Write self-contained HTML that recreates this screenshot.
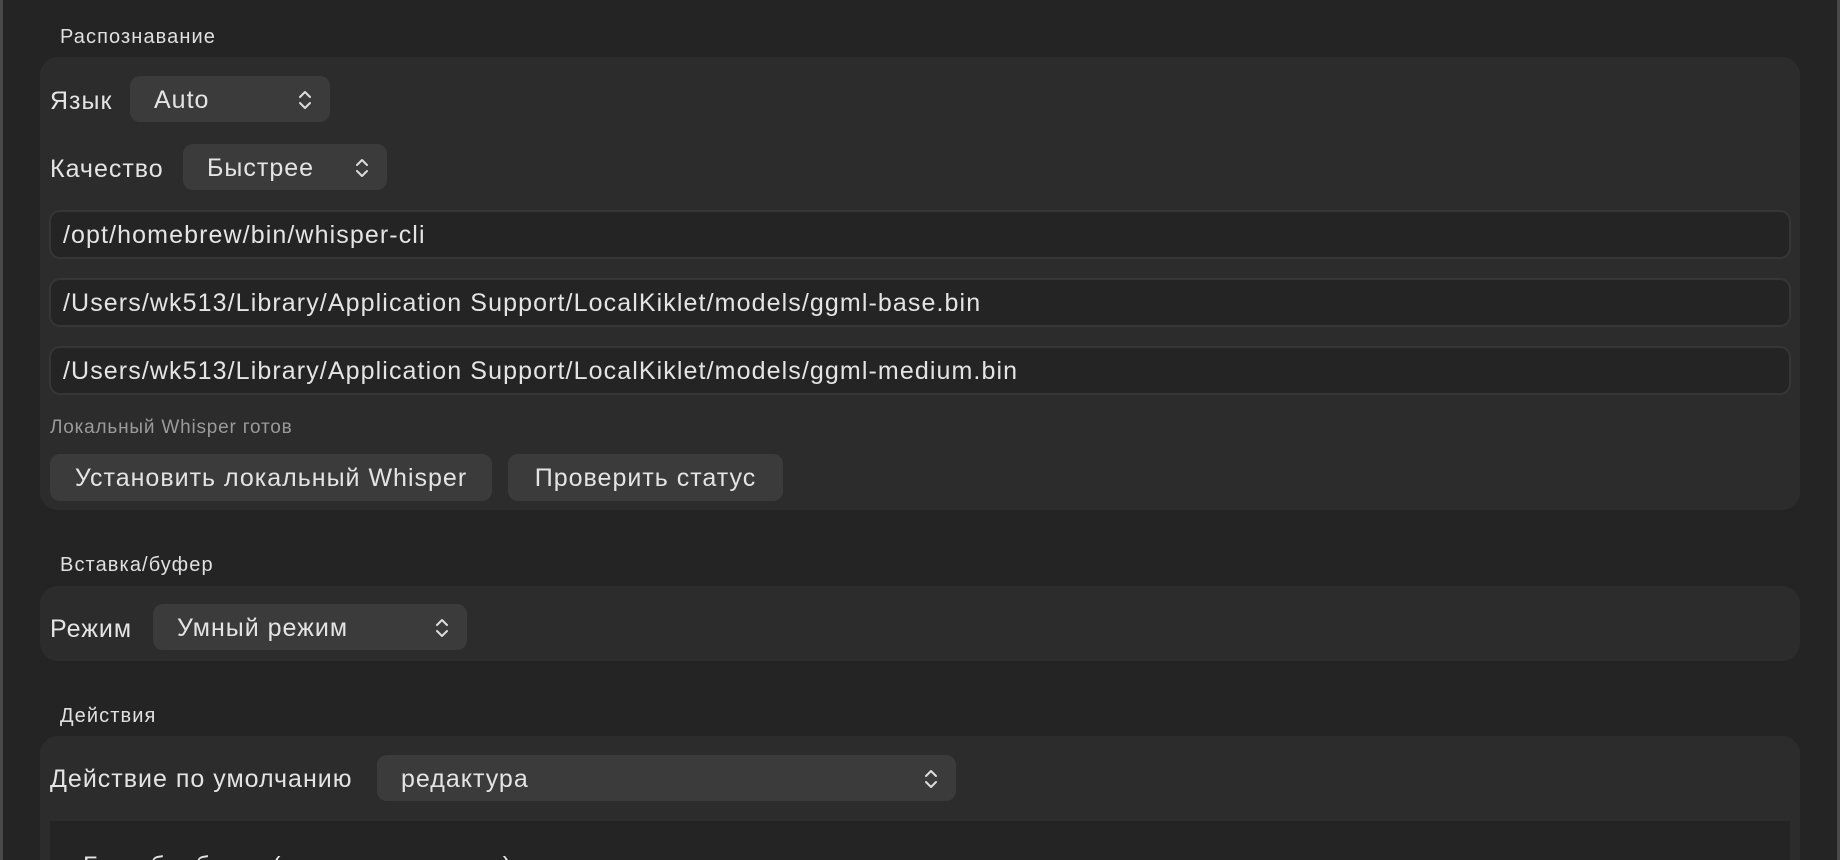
<!DOCTYPE html>
<html><head><meta charset="utf-8"><style>
*{box-sizing:border-box;margin:0;padding:0}
html,body{width:1840px;height:860px;overflow:hidden;background:#242424;font-family:"Liberation Sans","DejaVu Sans",sans-serif;color:#e4e4e4}
.wrap{position:relative;width:1840px;height:860px;overflow:hidden}
.ab{position:absolute;white-space:nowrap}
.edgeL{left:0;top:0;width:3px;height:860px;background:#4a4a4a}
.edgeR{left:1837px;top:0;width:3px;height:860px;background:#4a4a4a}
.title{font-size:20px;letter-spacing:1.1px;color:#e0e0e0;left:60px}
.card{background:#2c2c2c;border-radius:18px;left:40px;width:1760px}
.lbl{font-size:25px;letter-spacing:1px;left:50px;line-height:48px;height:46px}
.pop{background:#3b3b3b;border-radius:10px;height:46px;font-size:25px;letter-spacing:1px;line-height:48px;padding-left:24px}
.pop svg{position:absolute;right:18px;top:13px}
.field{left:49px;width:1742px;height:49px;background:#242424;border:2px solid #363636;border-radius:11px;font-size:25px;letter-spacing:1.1px;line-height:47px;padding-left:12px}
.btn{background:#3b3b3b;border-radius:10px;height:47px;top:454px;font-size:25px;letter-spacing:1px;line-height:49px;text-align:center}
</style></head><body><div class="wrap">
<div class="ab edgeL"></div><div class="ab edgeR"></div>

<div class="ab title" style="top:26px">Распознавание</div>
<div class="ab card" style="top:57px;height:453px"></div>
<div class="ab lbl" style="top:77px">Язык</div>
<div class="ab pop" style="left:130px;top:76px;width:200px">Auto<svg width="14" height="22" viewBox="0 0 14 22"><path d="M2 8 L7 3 L12 8 M2 14 L7 19 L12 14" fill="none" stroke="#ddd" stroke-width="2" stroke-linecap="round" stroke-linejoin="round"/></svg></div>
<div class="ab lbl" style="top:145px">Качество</div>
<div class="ab pop" style="left:183px;top:144px;width:204px">Быстрее<svg width="14" height="22" viewBox="0 0 14 22"><path d="M2 8 L7 3 L12 8 M2 14 L7 19 L12 14" fill="none" stroke="#ddd" stroke-width="2" stroke-linecap="round" stroke-linejoin="round"/></svg></div>
<div class="ab field" style="top:210px">/opt/homebrew/bin/whisper-cli</div>
<div class="ab field" style="top:278px">/Users/wk513/Library/Application Support/LocalKiklet/models/ggml-base.bin</div>
<div class="ab field" style="top:346px">/Users/wk513/Library/Application Support/LocalKiklet/models/ggml-medium.bin</div>
<div class="ab" style="left:50px;top:417px;font-size:19px;letter-spacing:0.8px;color:#9a9a9a">Локальный Whisper готов</div>
<div class="ab btn" style="left:50px;width:442px">Установить локальный Whisper</div>
<div class="ab btn" style="left:508px;width:275px">Проверить статус</div>

<div class="ab title" style="top:554px">Вставка/буфер</div>
<div class="ab card" style="top:586px;height:75px"></div>
<div class="ab lbl" style="top:605px">Режим</div>
<div class="ab pop" style="left:153px;top:604px;width:314px">Умный режим<svg width="14" height="22" viewBox="0 0 14 22"><path d="M2 8 L7 3 L12 8 M2 14 L7 19 L12 14" fill="none" stroke="#ddd" stroke-width="2" stroke-linecap="round" stroke-linejoin="round"/></svg></div>

<div class="ab title" style="top:705px">Действия</div>
<div class="ab card" style="top:736px;height:160px"></div>
<div class="ab lbl" style="top:755px">Действие по умолчанию</div>
<div class="ab pop" style="left:377px;top:755px;width:579px">редактура<svg width="14" height="22" viewBox="0 0 14 22"><path d="M2 8 L7 3 L12 8 M2 14 L7 19 L12 14" fill="none" stroke="#ddd" stroke-width="2" stroke-linecap="round" stroke-linejoin="round"/></svg></div>
<div class="ab" style="left:50px;top:821px;width:1740px;height:60px;background:#242424"></div>
<div class="ab" style="left:83px;top:852px;font-size:25px;letter-spacing:1px">Без обработки (оставить как есть)</div>
</div></body></html>
